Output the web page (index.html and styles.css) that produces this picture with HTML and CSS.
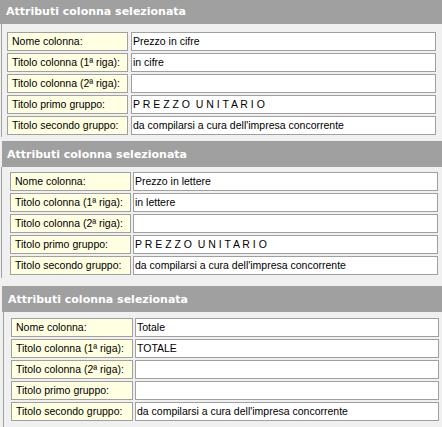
FILE: index.html
```html
<!DOCTYPE html>
<html lang="it">
<head>
<meta charset="utf-8">
<title>Attributi colonna</title>
<link rel="stylesheet" href="styles.css">
</head>
<body>
<div class="page">
  <section class="panel panel-a">
    <h2 class="panel-title">Attributi colonna selezionata</h2>
    <div class="panel-body">
      <div class="field-grid">
        <div class="label">Nome colonna:</div><div class="value">Prezzo in cifre</div>
        <div class="label">Titolo colonna (1ª riga):</div><div class="value">in cifre</div>
        <div class="label">Titolo colonna (2ª riga):</div><div class="value"></div>
        <div class="label">Titolo primo gruppo:</div><div class="value spaced">P R E Z Z O  U N I T A R I O</div>
        <div class="label">Titolo secondo gruppo:</div><div class="value">da compilarsi a cura dell'impresa concorrente</div>
      </div>
    </div>
  </section>
  <section class="panel panel-b">
    <h2 class="panel-title">Attributi colonna selezionata</h2>
    <div class="panel-body">
      <div class="field-grid">
        <div class="label">Nome colonna:</div><div class="value">Prezzo in lettere</div>
        <div class="label">Titolo colonna (1ª riga):</div><div class="value">in lettere</div>
        <div class="label">Titolo colonna (2ª riga):</div><div class="value"></div>
        <div class="label">Titolo primo gruppo:</div><div class="value spaced">P R E Z Z O  U N I T A R I O</div>
        <div class="label">Titolo secondo gruppo:</div><div class="value">da compilarsi a cura dell'impresa concorrente</div>
      </div>
    </div>
  </section>
  <section class="panel panel-c">
    <h2 class="panel-title">Attributi colonna selezionata</h2>
    <div class="panel-body">
      <div class="field-grid">
        <div class="label">Nome colonna:</div><div class="value">Totale</div>
        <div class="label">Titolo colonna (1ª riga):</div><div class="value">TOTALE</div>
        <div class="label">Titolo colonna (2ª riga):</div><div class="value"></div>
        <div class="label">Titolo primo gruppo:</div><div class="value"></div>
        <div class="label">Titolo secondo gruppo:</div><div class="value">da compilarsi a cura dell'impresa concorrente</div>
      </div>
    </div>
  </section>
</div>
</body>
</html>
```
FILE: styles.css
```css
html, body {
  margin: 0;
  padding: 0;
  background: #f0f0f0;
}
body {
  font-family: "Liberation Sans", Arial, sans-serif;
  font-size: 10.5px;
  color: #000;
  overflow: hidden;
}
.page {
  margin-top: -2px;
}
.panel-title {
  margin: 0;
  height: 26px;
  line-height: 27px;
  background: #a0a0a0;
  color: #fff;
  font-family: "DejaVu Sans", Verdana, sans-serif;
  font-weight: bold;
  font-size: 11px;
  padding-left: 6px;
}
.panel-body {
  border-left: 1px solid #a0a0a0;
  margin-left: 1px;
}
.field-grid {
  display: grid;
  grid-template-columns: 121px 1fr;
  column-gap: 3px;
  row-gap: 2px;
}
.label, .value {
  height: 17px;
  line-height: 17px;
  border: 1px solid #a0a0a0;
  white-space: pre;
  overflow: hidden;
}
.label {
  background: #ffffe1;
  padding-left: 4px;
  box-sizing: border-box;
  height: 19px;
}
.value {
  background: #fff;
  padding-left: 1px;
}

/* panel 1 */
.panel-a .panel-body {
  padding: 8px 6px 2px 5px;
}
/* panel 2 */
.panel-b {
  margin-top: 4px;
}
.panel-b .panel-title {
  margin-left: 2px;
  padding-left: 5px;
}
.panel-b .panel-body {
  padding: 5px 4px 3px 8px;
}
.panel-b .field-grid {
  column-gap: 2px;
}
/* panel 3 */
.panel-c {
  margin-top: 8px;
}
.panel-c .panel-title {
  margin-left: 2px;
  padding-left: 6px;
}
.panel-c .panel-body {
  margin-left: 3px;
  padding: 6px 3px 10px 7px;
}
.panel-c .field-grid {
  grid-template-columns: 122px 1fr;
  column-gap: 2px;
}
```
